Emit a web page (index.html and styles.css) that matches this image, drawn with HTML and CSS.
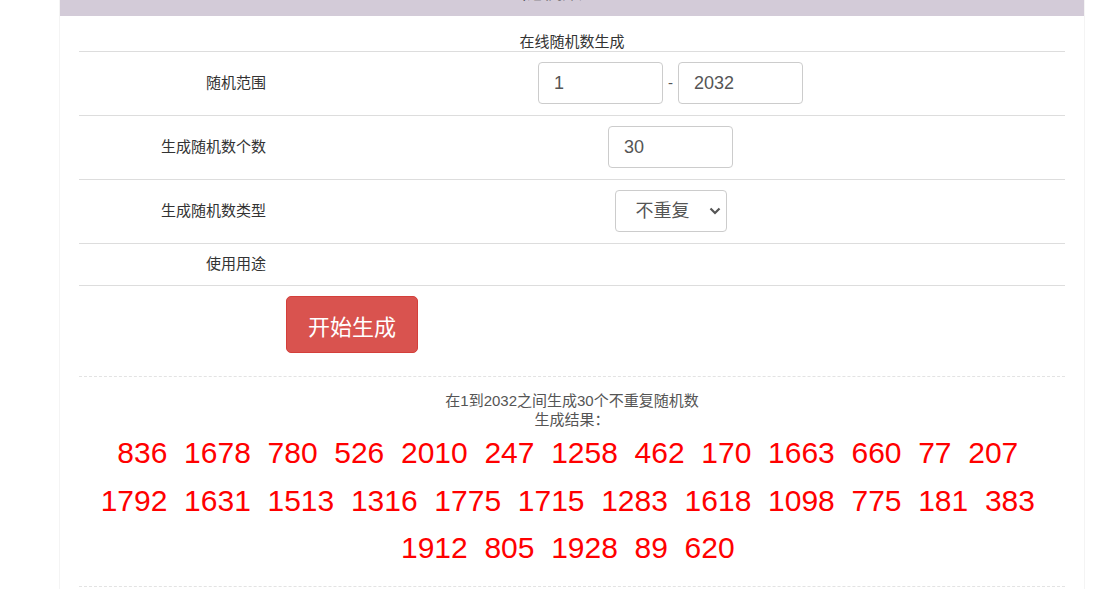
FILE: index.html
```html
<html lang="zh-CN">
<head>
  <meta charset="UTF-8">
  <title>在线随机数生成</title>
  <link rel="stylesheet" href="styles.css">
</head>
<body>
  <div class="page">
    <div class="topbar"><span class="topbar-title">随机数</span></div>
    <div class="content">
      <table class="form-table">
        <tr>
          <td colspan="2" class="form-title">在线随机数生成</td>
        </tr>
        <tr>
          <td class="label">随机范围</td>
          <td class="field">
            <div class="range">
              <input type="text" class="input" value="1">
              <span class="dash">-</span>
              <input type="text" class="input" value="2032">
            </div>
          </td>
        </tr>
        <tr>
          <td class="label">生成随机数个数</td>
          <td class="field"><input type="text" class="input" value="30"></td>
        </tr>
        <tr>
          <td class="label">生成随机数类型</td>
          <td class="field">
            <div class="select-wrap">
              <select class="select">
                <option>不重复</option>
                <option>可重复</option>
              </select>
              <svg class="chevron" width="12" height="8" viewBox="0 0 12 8">
                <path d="M1.5 1.5 L6 6 L10.5 1.5" fill="none" stroke="#555" stroke-width="2.2"/>
              </svg>
            </div>
          </td>
        </tr>
        <tr>
          <td class="label">使用用途</td>
          <td class="field"></td>
        </tr>
        <tr class="btn-row">
          <td></td>
          <td class="btn-cell"><button class="btn-start">开始生成</button></td>
        </tr>
      </table>

      <div class="result">
        <div class="result-info">在1到2032之间生成30个不重复随机数</div>
        <div class="result-info">生成结果：</div>
        <div class="numbers">
          <span>836</span>&nbsp; <span>1678</span>&nbsp; <span>780</span>&nbsp; <span>526</span>&nbsp; <span>2010</span>&nbsp; <span>247</span>&nbsp; <span>1258</span>&nbsp; <span>462</span>&nbsp; <span>170</span>&nbsp; <span>1663</span>&nbsp; <span>660</span>&nbsp; <span>77</span>&nbsp; <span>207</span>&nbsp; <span>1792</span>&nbsp; <span>1631</span>&nbsp; <span>1513</span>&nbsp; <span>1316</span>&nbsp; <span>1775</span>&nbsp; <span>1715</span>&nbsp; <span>1283</span>&nbsp; <span>1618</span>&nbsp; <span>1098</span>&nbsp; <span>775</span>&nbsp; <span>181</span>&nbsp; <span>383</span>&nbsp; <span>1912</span>&nbsp; <span>805</span>&nbsp; <span>1928</span>&nbsp; <span>89</span>&nbsp; <span>620</span>&nbsp;
        </div>
      </div>
    </div>
  </div>
</body>
</html>
```

FILE: styles.css
```css
body {
  margin: 0;
  background: #fff;
  color: #333;
  font-family: "Liberation Sans", "Noto Sans CJK SC", sans-serif;
  font-size: 15px;
}

.page {
  width: 1024px;
  min-height: 589px;
  margin-left: 59px;
  border-left: 1px solid #f4f4f4;
  border-right: 1px solid #f4f4f4;
}

.topbar {
  height: 16px;
  overflow: hidden;
  background: #d3cbd8;
  text-align: center;
}

.topbar-title {
  display: block;
  margin-top: -18px;
  padding-right: 40px;
  font-size: 20px;
  line-height: 20px;
  color: #333;
}

.content {
  padding: 16px 19px 0;
}

.form-table {
  width: 100%;
  border-collapse: collapse;
  font-size: 15px;
  color: #333;
}

.form-table td {
  padding: 10px 10px 11px;
  vertical-align: middle;
  border-top: 1px solid #ddd;
  line-height: 20px;
}

.form-table td.form-title {
  padding: 0;
  border-top: none;
  text-align: center;
  line-height: 19px;
}

.label {
  width: 177px;
  text-align: right;
}

.field {
  text-align: center;
}

.range {
  display: inline-flex;
  align-items: center;
  gap: 5px;
}

.dash {
  font-size: 15px;
  color: #555;
}

.input {
  box-sizing: border-box;
  width: 125px;
  height: 42px;
  padding: 0 15px;
  border: 1px solid #ccc;
  border-radius: 4px;
  font-family: "Liberation Sans", "Noto Sans CJK SC", sans-serif;
  font-size: 18px;
  color: #555;
  vertical-align: middle;
}

.select-wrap {
  position: relative;
  display: inline-block;
  vertical-align: middle;
}

.select {
  box-sizing: border-box;
  width: 112px;
  height: 42px;
  padding: 0 0 0 20px;
  border: 1px solid #ccc;
  border-radius: 4px;
  background: #fff;
  appearance: none;
  -webkit-appearance: none;
  font-family: "Liberation Sans", "Noto Sans CJK SC", sans-serif;
  font-size: 18px;
  color: #555;
  text-align: left;
}

.chevron {
  position: absolute;
  right: 6px;
  top: 17px;
  pointer-events: none;
}

.btn-row td {
  padding-bottom: 10px;
}

.form-table td.btn-cell {
  text-align: left;
}

.btn-start {
  height: 57px;
  padding: 0 21px;
  border: 1px solid #d43f3a;
  border-radius: 5px;
  background: #d9534f;
  color: #fff;
  font-family: "Liberation Sans", "Noto Sans CJK SC", sans-serif;
  font-size: 22px;
  cursor: pointer;
}

.result {
  margin-top: 13px;
  padding: 14px 0 14px;
  border-top: 1px dashed #e3e3e3;
  border-bottom: 1px dashed #e3e3e3;
  text-align: center;
}

.result-info {
  line-height: 19px;
  font-size: 15px;
  color: #555;
}

.numbers {
  font-family: "Liberation Sans", Arial, sans-serif;
  font-size: 30px;
  line-height: 47.5px;
  color: #f00;
}
```
